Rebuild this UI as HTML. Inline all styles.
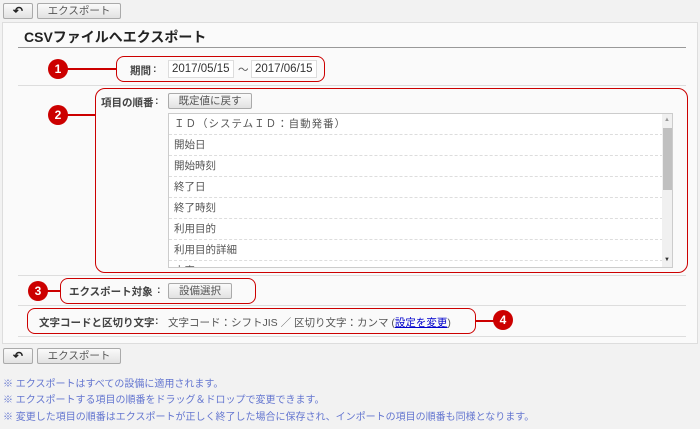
<!DOCTYPE html>
<html><head><meta charset="utf-8"><style>
*{box-sizing:border-box;margin:0;padding:0}
body{width:700px;height:429px;background:#f2f2f2;font-family:"Liberation Sans","Noto Sans CJK JP",sans-serif;font-size:10.5px;color:#333;position:relative;overflow:hidden}
.a{position:absolute}
.btn{position:absolute;height:16px;border:1px solid #aaa;border-radius:2px;background:linear-gradient(#fafafa,#e2e2e2);font-size:10.5px;color:#555;text-align:center;line-height:14px}
.bk{font-weight:bold;color:#222;font-size:12px}
.panel{left:2px;top:22px;width:696px;height:322px;background:#fafafa;border:1px solid #ddd}
.hr{position:absolute;height:1px;background:#ddd}
.rb{position:absolute;border:1.5px solid #c00;border-radius:8px}
.c{position:absolute;width:20px;height:20px;border-radius:50%;background:#c00;color:#fff;font-weight:bold;font-size:12px;text-align:center;line-height:20px}
.ln{position:absolute;height:1.5px;background:#c00}
.in{position:absolute;height:18px;border:1px solid #ddd;background:#fff;font-size:11.5px;line-height:16px;padding-left:3px;color:#333}
.list{left:168px;top:113px;width:505px;height:155px;border:1px solid #ccc;background:#fff;overflow:hidden}
.it{height:21px;border-bottom:1px dashed #ddd;line-height:20px;padding-left:5px;color:#555;width:494px}
.note{position:absolute;left:3px;color:#6476d0;font-size:10px}
.lb{position:absolute;font-weight:bold;color:#444}
</style></head><body>
<div class="btn bk" style="left:3px;top:3px;width:30px">↶</div>
<div class="btn" style="left:37px;top:3px;width:84px">エクスポート</div>
<div class="a panel"></div>
<div class="a" style="left:24px;top:27px;font-size:14px;font-weight:bold;color:#222">CSVファイルへエクスポート</div>
<div class="hr" style="left:18px;top:47px;width:668px;background:#999"></div>
<div class="hr" style="left:18px;top:85px;width:668px"></div>
<div class="hr" style="left:18px;top:275px;width:668px"></div>
<div class="hr" style="left:18px;top:305px;width:668px"></div>
<div class="hr" style="left:18px;top:336px;width:668px"></div>

<div class="rb" style="left:116px;top:56px;width:209px;height:26px"></div>
<div class="ln" style="left:66px;top:68px;width:50px"></div>
<div class="c" style="left:48px;top:59px">1</div>
<div class="lb" style="left:130px;top:63px">期間</div><div class="lb" style="left:153px;top:63px">:</div>
<div class="in" style="left:168px;top:60px;width:66px">2017/05/15</div>
<div class="a" style="left:238px;top:62px;color:#555">～</div>
<div class="in" style="left:251px;top:60px;width:66px">2017/06/15</div>

<div class="rb" style="left:95px;top:88px;width:593px;height:185px;border-radius:10px"></div>
<div class="ln" style="left:66px;top:114px;width:29px"></div>
<div class="c" style="left:48px;top:105px">2</div>
<div class="lb" style="left:101px;top:95px">項目の順番</div><div class="lb" style="left:155px;top:95px">:</div>
<div class="btn" style="left:168px;top:93px;width:84px">既定値に戻す</div>
<div class="a list">
<div class="it" style="letter-spacing:1px">ＩＤ（システムＩＤ：自動発番）</div>
<div class="it">開始日</div><div class="it">開始時刻</div><div class="it">終了日</div><div class="it">終了時刻</div><div class="it">利用目的</div><div class="it">利用目的詳細</div><div class="it">内容</div>
<div class="a" style="left:493px;top:0;width:11px;height:153px;background:#f0f0f0"></div>
<div class="a" style="left:494px;top:14px;width:9px;height:62px;background:#c0c0c0"></div>
<div class="a" style="left:495px;top:3px;font-size:6px;color:#999">▲</div>
<div class="a" style="left:495px;top:143px;font-size:6px;color:#333">▼</div>
</div>

<div class="rb" style="left:60px;top:278px;width:196px;height:26px"></div>
<div class="ln" style="left:44px;top:290px;width:16px"></div>
<div class="c" style="left:28px;top:281px">3</div>
<div class="lb" style="left:69px;top:284px">エクスポート対象</div><div class="lb" style="left:157px;top:284px">:</div>
<div class="btn" style="left:168px;top:283px;width:64px">設備選択</div>

<div class="rb" style="left:27px;top:308px;width:449px;height:26px"></div>
<div class="ln" style="left:476px;top:320px;width:18px"></div>
<div class="c" style="left:493px;top:310px">4</div>
<div class="lb" style="left:39px;top:315px">文字コードと区切り文字</div><div class="lb" style="left:155px;top:315px">:</div>
<div class="a" style="left:168px;top:315px;color:#555">文字コード：シフトJIS ／ 区切り文字：カンマ (<span style="color:#00c;text-decoration:underline">設定を変更</span>)</div>

<div class="btn bk" style="left:3px;top:348px;width:30px">↶</div>
<div class="btn" style="left:37px;top:348px;width:84px">エクスポート</div>
<div class="note" style="top:375px">※ エクスポートはすべての設備に適用されます。</div>
<div class="note" style="top:391px">※ エクスポートする項目の順番をドラッグ＆ドロップで変更できます。</div>
<div class="note" style="top:408px">※ 変更した項目の順番はエクスポートが正しく終了した場合に保存され、インポートの項目の順番も同様となります。</div>
</body></html>
